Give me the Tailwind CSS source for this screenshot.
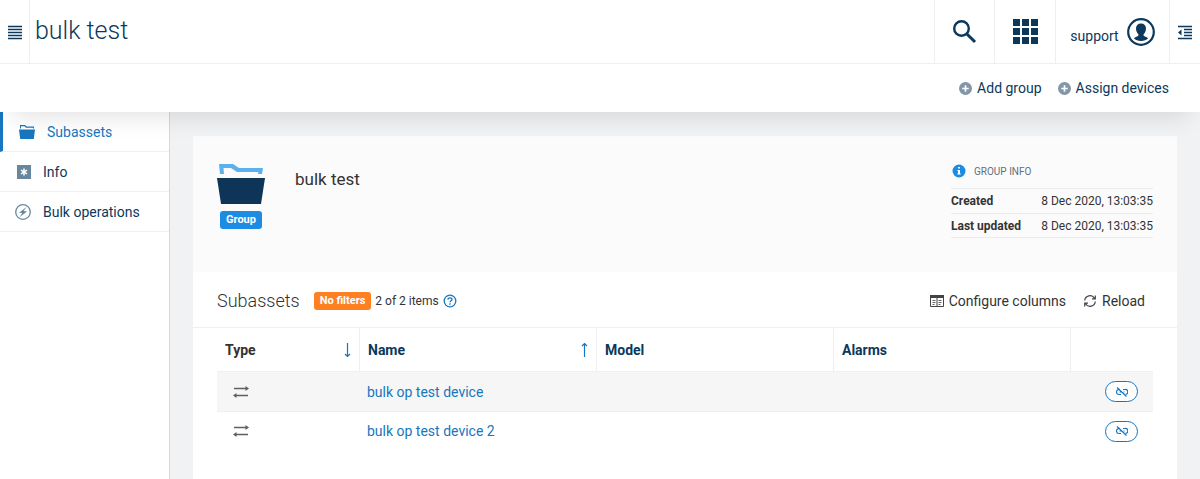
<!DOCTYPE html>
<html lang="en">
<head>
<meta charset="utf-8">
<meta name="viewport" content="width=device-width, initial-scale=1">
<title>bulk test</title>
<script src="https://cdn.jsdelivr.net/npm/@tailwindcss/browser@4"></script>
</head>
<body class="flex min-h-screen flex-col bg-[#f0f2f4] font-['Roboto',sans-serif] text-sm text-[#0b385b]">
<header class="relative z-10 bg-white shadow-[0_16px_24px_-12px_rgba(0,0,0,0.12)]">
  <div class="flex h-16 items-stretch border-b border-[#eeeff0]">
    <button type="button" aria-label="Toggle navigation" class="flex w-[30px] items-center justify-center border-r border-[#eeeff0]">
      <svg class="h-4 w-4" viewBox="0 0 16 16" fill="none" stroke="currentColor" stroke-width="1.300"><path d="M1 2.500h14M1 5.500h14M1 8.500h14M1 11.500h14M1 14.500h14"/></svg>
    </button>
    <h1 class="flex-1 pt-[13px] pl-[5px] text-[25px] leading-9 font-light">bulk test</h1>
    <button type="button" aria-label="Search" class="flex w-[61px] items-center justify-center border-x border-[#eeeff0]">
      <svg class="h-6 w-6" viewBox="0 0 24 24" fill="none" stroke="currentColor"><circle cx="8.500" cy="8.500" r="7.300" stroke-width="2.400"/><path d="M13.700 13.700l8.300 8.300" stroke-width="3"/></svg>
    </button>
    <button type="button" aria-label="Applications" class="flex w-[61px] items-center justify-center border-r border-[#eeeff0]">
      <svg class="h-[25px] w-[25px]" viewBox="0 0 25 25" fill="currentColor"><path d="M0 0h7v7H0zM9 0h7v7H9zM18 0h7v7h-7zM0 9h7v7H0zM9 9h7v7H9zM18 9h7v7h-7zM0 18h7v7H0zM9 18h7v7H9zM18 18h7v7h-7z"/></svg>
    </button>
    <button type="button" class="flex w-[114px] items-center justify-center gap-2 border-r border-[#eeeff0]">
      <span class="pt-2">support</span>
      <svg class="h-7 w-7" viewBox="0 0 28 28"><circle cx="14" cy="14" r="12.800" fill="none" stroke="currentColor" stroke-width="2.200"/><path fill="currentColor" d="M14 5.500c-3.200 0-5 2-5 5 0 2.500 1 4 2.200 5.600.5.700.4 1.600-.2 2-1.300.8-3 .8-4 2.400C8.500 22 11 23 14 23s5.500-1 7-2.500c-1-1.600-2.700-1.600-4-2.400-.6-.4-.7-1.300-.2-2C18 14.500 19 13 19 10.500c0-3-1.800-5-5-5z"/></svg>
    </button>
    <button type="button" aria-label="Open side panel" class="flex w-[30px] items-center justify-center">
      <svg class="h-4 w-4" viewBox="0 0 16 16"><path fill="none" stroke="currentColor" stroke-width="1.300" d="M1 2.500h14M7 5.500h8M7 8.500h8M7 11.500h8M1 14.500h14"/><path fill="currentColor" d="M4.500 5.500v6L1 8.500z"/></svg>
    </button>
  </div>
  <div class="flex h-12 items-center justify-end gap-4 pr-[31px]">
    <button type="button" class="flex items-center gap-[5px]">
      <svg class="h-[13px] w-[13px]" viewBox="0 0 12 12"><circle cx="6" cy="6" r="6" fill="#8197a8"/><path d="M3 6h6M6 3v6" stroke="#fff" stroke-width="1.500"/></svg>Add group</button>
    <button type="button" class="flex items-center gap-[5px]">
      <svg class="h-[13px] w-[13px]" viewBox="0 0 12 12"><circle cx="6" cy="6" r="6" fill="#8197a8"/><path d="M3 6h6M6 3v6" stroke="#fff" stroke-width="1.500"/></svg>Assign devices</button>
  </div>
</header>
<div class="flex flex-1 items-stretch">
  <nav class="w-[170px] shrink-0 border-r border-[#d5d8da] bg-white">
    <a href="#subassets" class="flex h-10 items-center gap-3 border-b border-l-3 border-b-[#eeeff0] border-l-[#1776bf] pl-4 text-[#1776bf]">
      <svg class="h-4 w-4" viewBox="0 0 16 16" fill="currentColor"><path d="M0 5.500h16L14.800 15H1.200zM1 1h5l1.500 1.500H15V4.500H14V3.700H7L5.500 2.200H2V4.500H1z"/></svg>Subassets</a>
    <a href="#info" class="flex h-10 items-center gap-3 border-b border-[#eeeff0] pl-[15px]">
      <svg class="h-4 w-4" viewBox="0 0 16 16"><path fill="#69879c" d="M2 1h14v14H2z"/><path d="M9 4.500v7M6 6.200l6 3.600M12 6.200L6 9.800" stroke="#fff" stroke-width="1.500"/></svg>Info</a>
    <a href="#bulk" class="flex h-10 items-center gap-3 border-b border-[#eeeff0] pl-[15px]">
      <svg class="h-4 w-4" viewBox="0 0 16 16"><circle cx="8" cy="8" r="7.300" fill="none" stroke="#69879c" stroke-width="1.300"/><path fill="#69879c" d="M11.500 3L4 8.800l3.200.3L4.800 13 12 7.400l-3.400-.3z"/></svg>Bulk operations</a>
  </nav>
  <main class="flex min-w-0 flex-1 flex-col px-[23px] pt-6">
    <section class="flex h-[136px] items-start bg-[#fbfbfb] px-6 pt-6">
      <div class="flex w-12 flex-col items-center gap-[3px] pt-1">
        <svg class="h-10 w-12" viewBox="0 0 48 40"><path fill="#5bb0ee" d="M2 0h14l6 4h24l-1 6h-4l.4-2H20l-6-4H6.500L7 10H3z"/><path fill="#0e3558" d="M0 14h48l-4 26H4z"/></svg>
        <span class="mt-1 rounded-[3px] bg-[#1c8ce3] px-1.5 text-[11px] leading-[18px] font-bold text-white">Group</span>
      </div>
      <h2 class="flex-1 pt-1.5 pl-[30px] text-[17px] leading-[26px] text-[#333]">bulk test</h2>
      <div class="w-[202px] text-xs text-[#333]">
        <p class="flex h-7 items-start gap-2 pt-1 pl-px text-[10px] leading-4 text-[#5f6f7c] uppercase">
          <svg class="h-3.5 w-3.5" viewBox="0 0 14 14"><circle cx="7" cy="7" r="6.500" fill="#1c8ce3"/><path fill="#fff" d="M6 3h2v1.500H6zM5.500 6H8v3.500h.7v1H5.300v-1H6V7h-.5z"/></svg>Group info</p>
        <dl>
          <div class="flex h-[25px] items-center justify-between border-t border-[#eaebec]"><dt class="font-bold">Created</dt><dd>8 Dec 2020, 13:03:35</dd></div>
          <div class="flex h-[25px] items-center justify-between border-y border-[#eaebec]"><dt class="font-bold">Last updated</dt><dd>8 Dec 2020, 13:03:35</dd></div>
        </dl>
      </div>
    </section>
    <section class="flex-1 bg-white text-[#333]">
      <div class="flex h-14 items-center border-b border-[#eeeff0] px-6 pt-0.5">
        <h3 class="text-lg font-light">Subassets</h3>
        <span class="ml-3.5 rounded-[3px] bg-[#ff8022] px-1.5 text-[11px] leading-[18px] font-bold text-white">No filters</span>
        <span class="ml-1 text-xs">2 of 2 items</span>
        <button type="button" aria-label="Help" class="ml-1 text-[#1776bf]"><svg class="h-3.5 w-3.5" viewBox="0 0 14 14" fill="none" stroke="currentColor" stroke-width="1.300"><circle cx="7" cy="7" r="5.800"/><path d="M5 5.800C5 4.500 5.800 3.800 7 3.800s2 .7 2 1.700C9 6.800 7 6.900 7 8.300M7 9.300v1.400"/></svg></button>
        <div class="ml-auto flex items-center gap-4 pr-2">
          <button type="button" class="flex items-center gap-1">
            <svg class="h-4 w-4" viewBox="0 0 16 16" fill="none" stroke="#444"><path fill="#444" stroke="none" d="M1 2h14v3H1z"/><path d="M1.500 4.500h13v9h-13zM8 5v8.500"/><path stroke="#666" d="M3.500 7.500h3M3.500 9.500h3M3.500 11.500h2M9.500 7.500h3M9.500 9.500h3M9.500 11.500h2"/></svg>Configure columns</button>
          <button type="button" class="flex items-center gap-1">
            <svg class="h-4 w-4" viewBox="0 0 16 16" fill="none" stroke="#444" stroke-width="1.200"><path d="M2.700 7.500A5.300 5.300 0 0 1 12.500 5.300M13.300 8.500A5.300 5.300 0 0 1 3.500 10.700M13.300 2.500v3.300H10M2.700 13.500v-3.300H6"/></svg>Reload</button>
        </div>
      </div>
      <div class="px-6">
        <table class="w-full table-fixed border-separate border-spacing-0 text-left">
          <colgroup><col class="w-[143px]"><col><col><col><col class="w-[82px]"></colgroup>
          <thead>
            <tr class="h-11">
              <th scope="col" class="border-r border-b border-[#eeeff0] px-2"><button type="button" class="flex w-full items-center justify-between font-bold">Type<svg class="h-4 w-2 text-[#1776bf]" viewBox="0 0 8 16" fill="none" stroke="currentColor"><path d="M4.500 1v13M2 12l2.500 2.500L7 12" stroke-width="1.200"/></svg></button></th>
              <th scope="col" class="border-r border-b border-[#eeeff0] px-2 text-[#0b385b]"><button type="button" class="flex w-full items-center justify-between font-bold">Name<svg class="h-4 w-2 text-[#1776bf]" viewBox="0 0 8 16" fill="none" stroke="currentColor"><path d="M4.500 15V2M2 4l2.500-2.500L7 4" stroke-width="1.200"/></svg></button></th>
              <th scope="col" class="border-r border-b border-[#eeeff0] px-2 font-bold text-[#0b385b]">Model</th>
              <th scope="col" class="border-r border-b border-[#eeeff0] px-2 font-bold text-[#0b385b]">Alarms</th>
              <td class="border-b border-[#eeeff0]"></td>
            </tr>
          </thead>
          <tbody>
            <tr class="h-10 bg-[#f6f6f6]">
              <td class="border-b border-[#eeeff0] pl-4"><svg class="h-4 w-4" role="img" aria-label="Device" viewBox="0 0 16 16"><path stroke="#5c5f63" stroke-width="1.400" d="M1 4.500h13M2 11.500h13"/><path fill="#5c5f63" d="M12.500 2L16 4.500 12.500 7zM3.500 9L0 11.500 3.500 14z"/></svg></td>
              <td class="border-b border-[#eeeff0] px-[7px]"><a href="#device-1" class="text-[#1776bf]">bulk op test device</a></td>
              <td class="border-b border-[#eeeff0]"></td><td class="border-b border-[#eeeff0]"></td>
              <td class="border-b border-[#eeeff0] pr-[15px]"><button type="button" aria-label="Unassign bulk op test device" class="ml-auto flex h-[21px] w-[33px] items-center justify-center rounded-full border border-[#1776bf] bg-white text-[#1776bf]"><svg class="h-3 w-3" viewBox="0 0 12 12" fill="none" stroke="currentColor" stroke-width="1.200"><path d="M1 1.500l9.500 9M4 3.500H3a2.400 2.400 0 0 0 0 5h2M7 3.500h2a2.400 2.400 0 0 1 .7 4.900M3.500 6h2M7.500 6h1"/></svg></button></td>
            </tr>
            <tr class="h-[38px]">
              <td class="pl-4"><svg class="h-4 w-4" role="img" aria-label="Device" viewBox="0 0 16 16"><path stroke="#5c5f63" stroke-width="1.400" d="M1 4.500h13M2 11.500h13"/><path fill="#5c5f63" d="M12.500 2L16 4.500 12.500 7zM3.500 9L0 11.500 3.500 14z"/></svg></td>
              <td class="px-[7px]"><a href="#device-2" class="text-[#1776bf]">bulk op test device 2</a></td>
              <td></td><td></td>
              <td class="pr-[15px]"><button type="button" aria-label="Unassign bulk op test device 2" class="ml-auto flex h-[21px] w-[33px] items-center justify-center rounded-full border border-[#1776bf] bg-white text-[#1776bf]"><svg class="h-3 w-3" viewBox="0 0 12 12" fill="none" stroke="currentColor" stroke-width="1.200"><path d="M1 1.500l9.500 9M4 3.500H3a2.400 2.400 0 0 0 0 5h2M7 3.500h2a2.400 2.400 0 0 1 .7 4.900M3.500 6h2M7.500 6h1"/></svg></button></td>
            </tr>
          </tbody>
        </table>
      </div>
    </section>
  </main>
</div>
</body>
</html>
